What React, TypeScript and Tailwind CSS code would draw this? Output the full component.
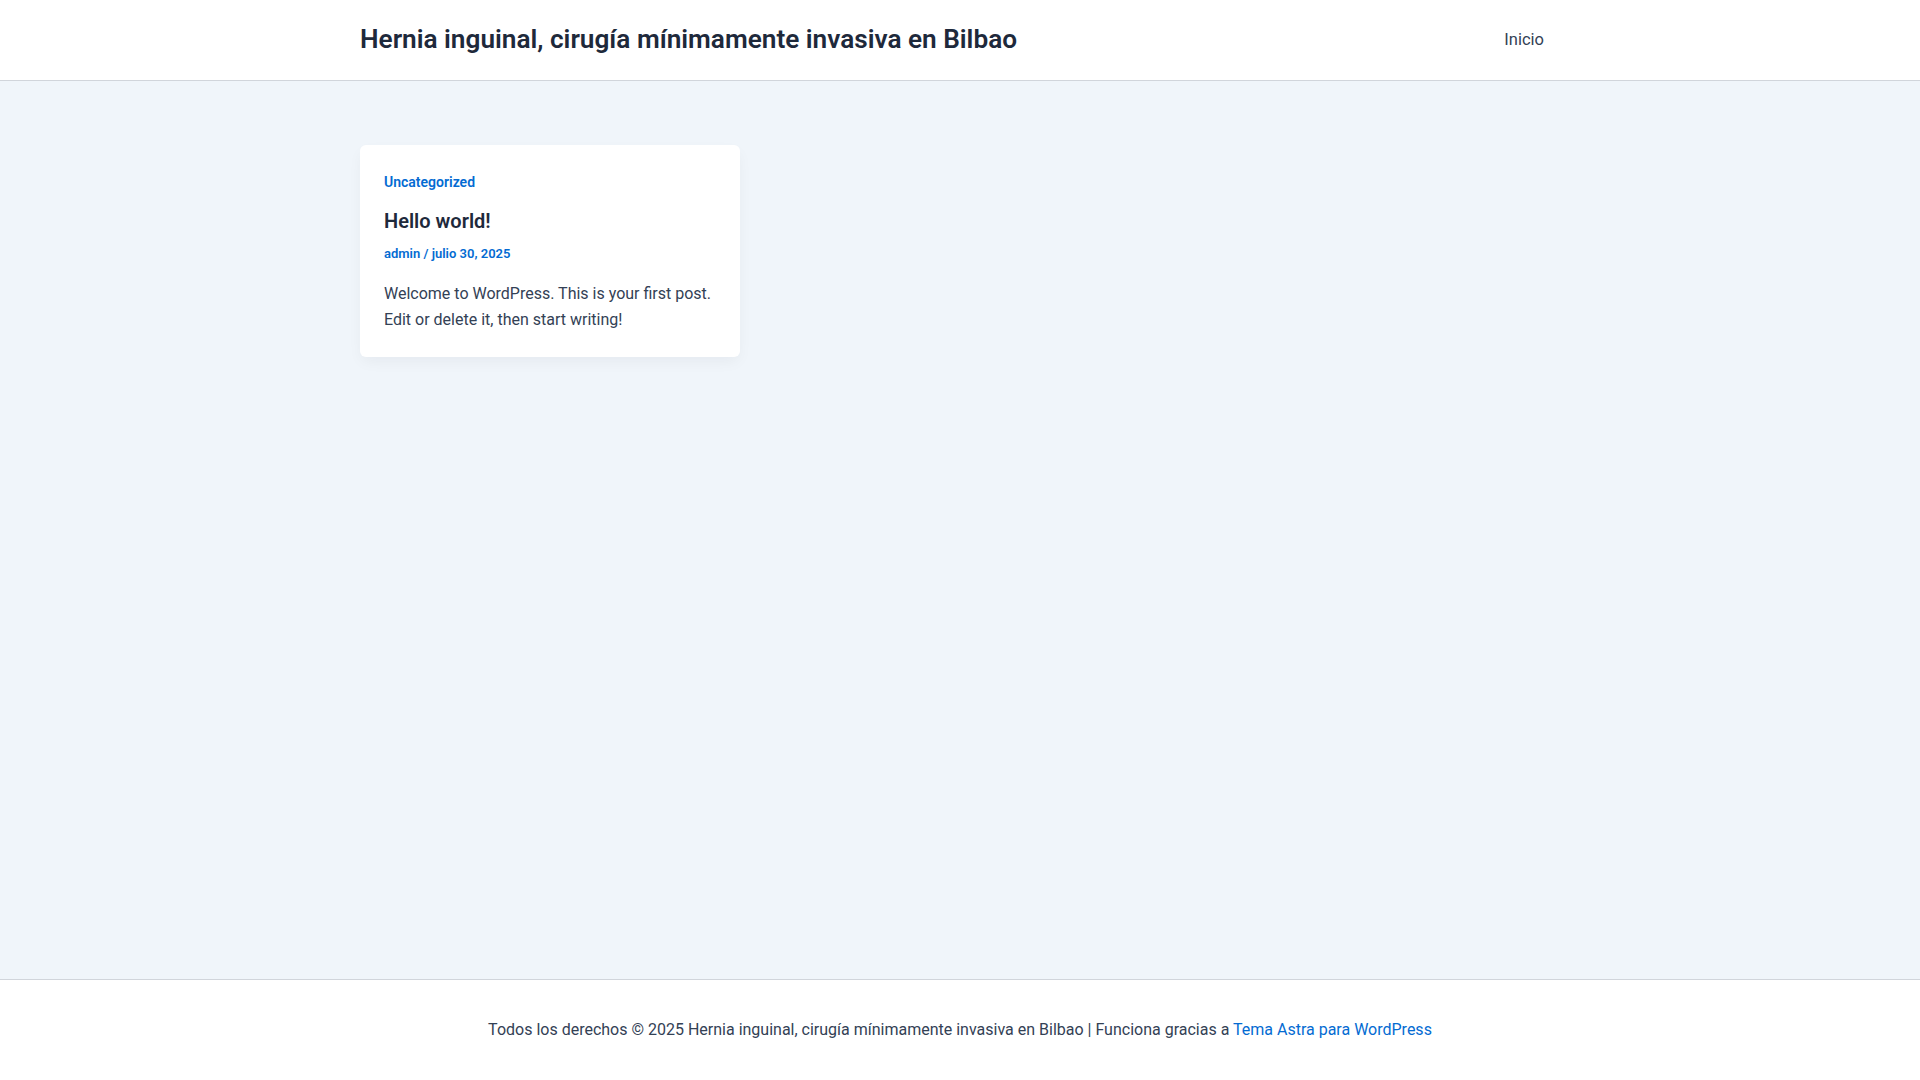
import React from 'react';

const App = () => {
  return (
    <div className="min-h-screen flex flex-col bg-[#F0F5FA] font-['Roboto',sans-serif] text-[#334155] text-[16px]">
      {/* Header */}
      <header className="bg-white border-b border-[#D1D5DB]">
        <div className="max-w-[1240px] mx-auto px-5 h-[80px] flex items-center justify-between">
          <a href="#" className="text-[26.2px] font-semibold text-[#1e293b] leading-none -mt-[2px]">
            Hernia inguinal, cirugía mínimamente invasiva en Bilbao
          </a>
          <nav>
            <a href="#" className="px-4 text-[16.5px] text-[#334155]">Inicio</a>
          </nav>
        </div>
      </header>

      {/* Blog grid */}
      <main className="flex-1">
        <div className="max-w-[1240px] mx-auto px-5 pt-16">
          <div className="grid grid-cols-3 gap-[30px]">
            <article className="bg-white rounded-md shadow-[0_6px_15px_-2px_rgba(16,24,40,0.05)] px-6 pt-[26px] pb-[24px]">
              <a href="#" className="block text-[14px] font-semibold text-[#046bd2] leading-[1.6]">Uncategorized</a>
              <h2 className="mt-[14px] text-[20px] font-semibold text-[#1e293b] leading-[28px]">
                <a href="#">Hello world!</a>
              </h2>
              <div className="mt-[9px] text-[13px] font-semibold text-[#046bd2] leading-[1.6]">
                <a href="#">admin</a> / <span>julio 30, 2025</span>
              </div>
              <p className="mt-4 leading-[26px]">
                Welcome to WordPress. This is your first post. Edit or delete it, then start writing!
              </p>
            </article>
          </div>
        </div>
      </main>

      {/* Footer */}
      <footer className="bg-white border-t border-[#D1D5DB]">
        <div className="h-[100px] flex items-center justify-center leading-[1.65]">
          <p>
            Todos los derechos © 2025 Hernia inguinal, cirugía mínimamente invasiva en Bilbao | Funciona gracias a{' '}
            <a href="#" className="text-[#046bd2]">Tema Astra para WordPress</a>
          </p>
        </div>
      </footer>
    </div>
  );
};

export default App;
